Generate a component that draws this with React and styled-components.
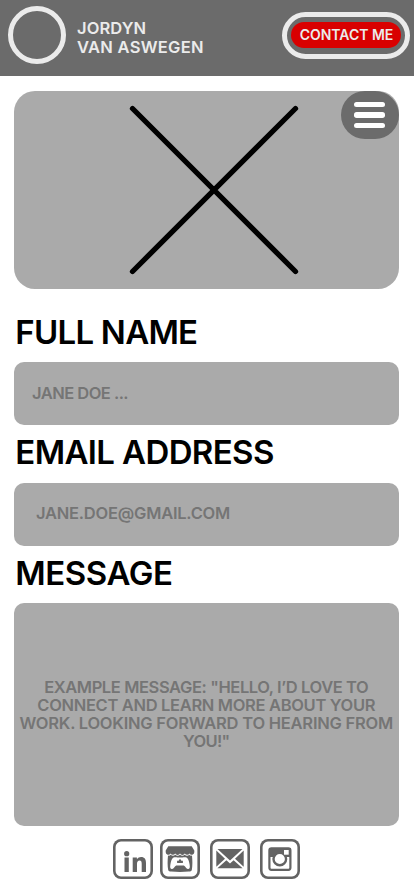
import React from 'react';
import styled, { createGlobalStyle } from 'styled-components';

const Global = createGlobalStyle`
  *, *::before, *::after { box-sizing: border-box; }
  body { margin: 0; background: #fff; font-family: Inter, "Open Sans", sans-serif; font-weight: 600; }
`;

const Page = styled.div`
  width: 414px;
  height: 896px;
  overflow: hidden;
  display: flex;
  flex-direction: column;
  background: #fff;
`;

const Header = styled.header`
  height: 76px;
  flex: none;
  display: flex;
  align-items: flex-start;
  padding: 6px 4px 0 8px;
  background: #6b6b6b;
  color: #ebebeb;
`;

const Logo = styled.div`
  width: 58px;
  height: 58px;
  border: 5px solid #ebebeb;
  border-radius: 50%;
`;

const Name = styled.div`
  margin: 12.5px 0 0 11px;
  flex: 1;
  font-size: 16.5px;
  line-height: 19px;
  white-space: nowrap;
`;

const NameLine = styled.div`
  letter-spacing: ${(p) => p.$track}px;
`;

const ContactRing = styled.div`
  margin-top: 6px;
  width: 128px;
  height: 47px;
  padding: 5px 4px;
  border: 5px solid #ebebeb;
  border-radius: 24px;
`;

const ContactButton = styled.button`
  display: flex;
  align-items: center;
  justify-content: center;
  width: 100%;
  height: 26px;
  padding: 0 0 0 1px;
  border: 0;
  border-radius: 13px;
  background: #d90000;
  color: #ebebeb;
  font: 600 14px/26px Inter, sans-serif;
  letter-spacing: -0.04px;
  white-space: nowrap;
`;

const Main = styled.main`
  display: flex;
  flex-direction: column;
  padding: 15px 15px 0 13.5px;
`;

const Hero = styled.section`
  position: relative;
  height: 198px;
  display: flex;
  justify-content: center;
  padding: 14px 0 0 16px;
  border-radius: 21px;
  background: #aaa;
`;

const Menu = styled.button`
  position: absolute;
  top: 0;
  right: 0;
  width: 58px;
  height: 48px;
  display: flex;
  flex-direction: column;
  align-items: center;
  gap: 5.3px;
  padding: 10.7px 1px 0 0;
  border: 0;
  border-radius: 24px;
  background: #6b6b6b;
`;

const Bar = styled.span`
  width: 31px;
  height: 5.4px;
  border-radius: 2.7px;
  background: #fff;
`;

const Label = styled.label`
  height: 40px;
  margin-top: ${(p) => p.$gap}px;
  padding-left: 1.8px;
  font-size: 33px;
  line-height: 40px;
  letter-spacing: ${(p) => p.$track}px;
  color: #000;
  white-space: nowrap;
`;

const Field = styled.div`
  height: 63.4px;
  margin-top: ${(p) => p.$gap}px;
  padding-left: ${(p) => p.$inset}px;
  border-radius: 10px;
  background: #aaa;
  color: #757575;
  font-size: 16.5px;
  line-height: ${(p) => p.$line}px;
  letter-spacing: ${(p) => p.$track}px;
`;

const Message = styled.div`
  height: 222.6px;
  margin-top: 10.9px;
  padding-top: 74.7px;
  border-radius: 10px;
  background: #aaa;
  color: #757575;
  font-size: 16.5px;
  line-height: 18px;
  text-align: center;
  white-space: nowrap;
`;

const MessageLine = styled.div`
  letter-spacing: ${(p) => p.$track}px;
`;

const Socials = styled.nav`
  display: flex;
  margin: 12.6px 0 0 99.5px;
`;

const Social = styled.a`
  width: 40px;
  height: 40px;
  margin-right: ${(p) => p.$after}px;
  display: flex;
  align-items: center;
  justify-content: center;
  box-shadow: inset 0 0 0 2.6px #636363;
  border-radius: 8px;
  color: #636363;
  svg { flex: none; }
`;

export default function App() {
  return (
    <Page>
      <Global />
      <Header>
        <Logo />
        <Name>
          <NameLine $track={0.1}>JORDYN</NameLine>
          <NameLine $track={0.28}>VAN ASWEGEN</NameLine>
        </Name>
        <ContactRing><ContactButton>CONTACT ME</ContactButton></ContactRing>
      </Header>
      <Main>
        <Hero>
          <svg width="170" height="170" viewBox="0 0 170 170" fill="none" stroke="#000" strokeWidth="5.3" strokeLinecap="round">
            <path d="M3.5 3.5 166.5 166.5M166.5 3.5 3.5 166.5" />
          </svg>
          <Menu aria-label="Menu"><Bar /><Bar /><Bar /></Menu>
        </Hero>
        <Label $gap={22.6} $track={-0.75}>FULL NAME</Label>
        <Field $gap={10.4} $inset={18.5} $line={62} $track={-0.53}>JANE DOE ...</Field>
        <Label $gap={6.6} $track={-0.63}>EMAIL ADDRESS</Label>
        <Field $gap={10.6} $inset={22.5} $line={60.5} $track={-0.23}>JANE.DOE@GMAIL.COM</Field>
        <Label $gap={6.6} $track={-0.45}>MESSAGE</Label>
        <Message>
          <MessageLine $track={-0.4}>EXAMPLE MESSAGE: "HELLO, I’D LOVE TO</MessageLine>
          <MessageLine $track={-0.33}>CONNECT AND LEARN MORE ABOUT YOUR</MessageLine>
          <MessageLine $track={-0.23}>WORK. LOOKING FORWARD TO HEARING FROM</MessageLine>
          <MessageLine $track={-0.7}>YOU!"</MessageLine>
        </Message>
        <Socials>
          <Social $after={7} aria-label="LinkedIn">
            <svg width="40" height="40" viewBox="0 0 40 40" fill="currentColor">
              <circle cx="13.7" cy="14.7" r="2.6" />
              <path d="M11.5 18.5h4.3V33h-4.3zM19.7 18.5h4.2v1.8c1-1.5 2.5-2.3 4.2-2.3 3.5 0 4.9 2.3 4.9 6v9h-4.3v-8.2c0-2-.6-3.2-2.1-3.2-1.8 0-2.6 1.3-2.6 3.3V33h-4.3z" />
            </svg>
          </Social>
          <Social $after={10} aria-label="itch.io">
            <svg width="40" height="40" viewBox="0 0 40 40" fill="currentColor">
              <path d="M8.3 7.2h23.4l2.6 4.4v1.6a2.6 2.6 0 0 1-4.8 1.3 2.7 2.7 0 0 1-4.7 0 2.7 2.7 0 0 1-4.8 0 2.7 2.7 0 0 1-4.8 0 2.7 2.7 0 0 1-4.7 0 2.6 2.6 0 0 1-4.8-1.3v-1.6z" />
              <path d="M8 16.6c1.2.2 2-.1 2.7-.8 1.3 1.2 3.200 1.200 4.600 0 1.400 1.200 3.300 1.200 4.700 0 1.400 1.200 3.300 1.200 4.700 0 1.400 1.200 3.300 1.200 4.600 0 .7.7 1.500 1 2.700.8.5 5 .6 10.500-.2 14.300-.3 1.200-1.500 1.600-3 1.700-5.600.4-12 .4-17.600 0-1.500-.1-2.700-.5-3-1.700C7.400 27.100 7.500 21.600 8 16.600z" />
              <path fill="#fff" d="M13.500 18.500c1.300-.5 2.800-.4 3.900 0h5.200c1.100-.4 2.600-.5 3.900 0 1.700.7 2.500 3.600 3.100 7 .4 2.300.4 4.300-1.200 4.600-1.800.3-2.800-2.400-4.500-3.700h-7.800c-1.700 1.300-2.700 4-4.500 3.700-1.600-.3-1.600-2.300-1.200-4.600.6-3.400 1.400-6.300 3.100-7z" />
              <path d="m20 19.800 1.400 1.900h1.500v2.300h-5.800v-2.300h1.500z" />
            </svg>
          </Social>
          <Social $after={10} aria-label="Email">
            <svg width="40" height="40" viewBox="0 0 40 40" fill="currentColor">
              <path d="M7.5 10h25L20 21.5zM6.3 11.5l8.700 8.300-8.700 8zM33.700 11.500v16.300l-8.700-8zM16.400 21.200 20 24.500l3.600-3.300 9 8H7.400z" />
            </svg>
          </Social>
          <Social $after={0} aria-label="Instagram">
            <svg width="40" height="40" viewBox="0 0 40 40">
              <rect x="9.4" y="9.4" width="21" height="21.4" rx="2" fill="none" stroke="currentColor" strokeWidth="2.2" />
              <path d="M9 9h22v9H9z" fill="currentColor" />
              <circle cx="19.800" cy="20" r="6.300" fill="#fff" stroke="currentColor" strokeWidth="2.400" />
              <path d="M24 11h4.700v4.700H24z" fill="#fff" />
            </svg>
          </Social>
        </Socials>
      </Main>
    </Page>
  );
}
